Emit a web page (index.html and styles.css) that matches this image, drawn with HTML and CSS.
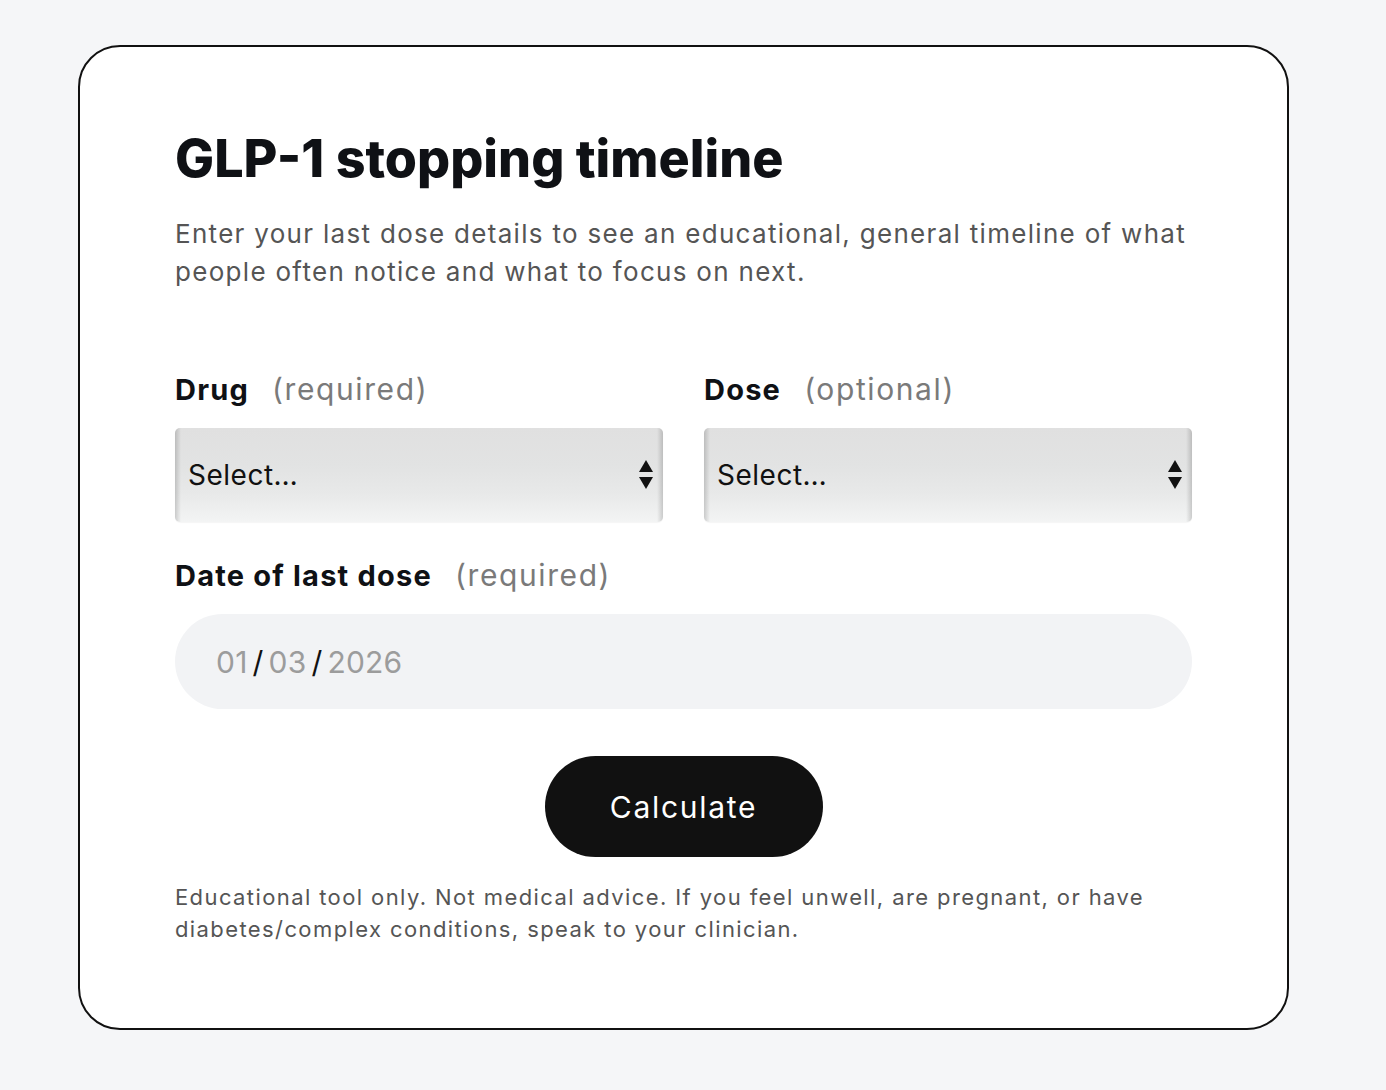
FILE: index.html
```html
<!DOCTYPE html>
<html lang="en">
<head>
    <meta charset="UTF-8">
    <meta name="viewport" content="width=device-width, initial-scale=1.0">
    <title>GLP-1 stopping timeline</title>
    <link rel="stylesheet" href="styles.css">
</head>
<body>
    <div class="card">
        <h1 class="title">GLP-1 stopping timeline</h1>
        <p class="intro">Enter your last dose details to see an educational, general timeline of what people often notice and what to focus on next.</p>

        <div class="row">
            <div class="field">
                <label class="label" for="drug">Drug <span class="hint">(required)</span></label>
                <div class="select-wrap">
                    <select id="drug" class="select">
                        <option>Select…</option>
                    </select>
                    <svg class="arrows" width="14" height="30" viewBox="0 0 14 30">
                        <path d="M7 0 L14 12 L0 12 Z" fill="#111"/>
                        <path d="M0 17 L14 17 L7 29 Z" fill="#111"/>
                    </svg>
                </div>
            </div>
            <div class="field">
                <label class="label" for="dose">Dose <span class="hint">(optional)</span></label>
                <div class="select-wrap">
                    <select id="dose" class="select">
                        <option>Select…</option>
                    </select>
                    <svg class="arrows" width="14" height="30" viewBox="0 0 14 30">
                        <path d="M7 0 L14 12 L0 12 Z" fill="#111"/>
                        <path d="M0 17 L14 17 L7 29 Z" fill="#111"/>
                    </svg>
                </div>
            </div>
        </div>

        <div class="field">
            <label class="label">Date of last dose <span class="hint">(required)</span></label>
            <div class="date-input">
                <span class="date-part">01</span><span class="date-sep">/</span><span class="date-part">03</span><span class="date-sep">/</span><span class="date-part">2026</span>
            </div>
        </div>

        <div class="actions">
            <button class="calc-button">Calculate</button>
        </div>

        <p class="disclaimer">Educational tool only. Not medical advice. If you feel unwell, are pregnant, or have diabetes/complex conditions, speak to your clinician.</p>
    </div>
</body>
</html>
```

FILE: styles.css
```css
* {
    margin: 0;
    padding: 0;
    box-sizing: border-box;
}

body {
    font-family: 'Inter', 'Noto Sans', sans-serif;
    background: #f5f6f8;
    color: #111;
    padding: 45px 97px 62px 78px;
}

.card {
    background: #fff;
    border: 2px solid #111;
    border-radius: 42px;
    padding: 80px 95px 83px 95px;
}

.title {
    font-size: 52px;
    font-weight: 800;
    line-height: 64px;
    color: #0f1115;
}

.intro {
    margin-top: 24px;
    font-size: 26px;
    letter-spacing: 1.3px;
    line-height: 38px;
    color: #555;
}

.row {
    display: grid;
    grid-template-columns: 1fr 1fr;
    gap: 41px;
    margin-top: 80px;
}

.field {
    display: flex;
    flex-direction: column;
}

.label {
    font-size: 29px;
    font-weight: 700;
    letter-spacing: 1.2px;
    line-height: 36px;
    color: #0f1115;
}

.hint {
    font-weight: 400;
    color: #7a7a7a;
    margin-left: 15px;
    font-size: 30px;
    letter-spacing: 1.6px;
}

.select-wrap {
    position: relative;
    margin-top: 20px;
    margin-bottom: 35px;
}

.select {
    appearance: none;
    -webkit-appearance: none;
    width: 100%;
    height: 94px;
    border: none;
    border-radius: 5px;
    padding: 0 13px;
    font-family: inherit;
    font-size: 28px;
    letter-spacing: 0.5px;
    color: #111;
    background:
        linear-gradient(to right, rgba(0,0,0,0.16), rgba(0,0,0,0) 6px, rgba(0,0,0,0) calc(100% - 6px), rgba(0,0,0,0.16)),
        linear-gradient(to bottom, #e0e0e0 0%, #e2e3e3 40%, #e8e9e9 70%, #f3f4f4 100%);
    box-shadow: 0 1px 1px rgba(0,0,0,0.04);
}

.arrows {
    position: absolute;
    right: 10px;
    top: 32px;
}

.date-input {
    margin-top: 20px;
    height: 95px;
    border-radius: 48px;
    background: #f2f3f5;
    display: flex;
    align-items: center;
    padding: 0 41px;
    font-size: 30px;
    letter-spacing: 0.2px;
}

.date-part {
    color: #9c9c9c;
}

.date-sep {
    color: #111;
    margin: 0 5px;
}

.actions {
    display: flex;
    justify-content: center;
    margin-top: 47px;
}

.calc-button {
    width: 278px;
    height: 101px;
    border: none;
    border-radius: 51px;
    background: #111;
    color: #fff;
    font-family: inherit;
    font-size: 30px;
    letter-spacing: 1.7px;
    cursor: pointer;
}

.disclaimer {
    margin-top: 24px;
    font-size: 22px;
    letter-spacing: 1.4px;
    line-height: 32px;
    color: #555;
}
```
